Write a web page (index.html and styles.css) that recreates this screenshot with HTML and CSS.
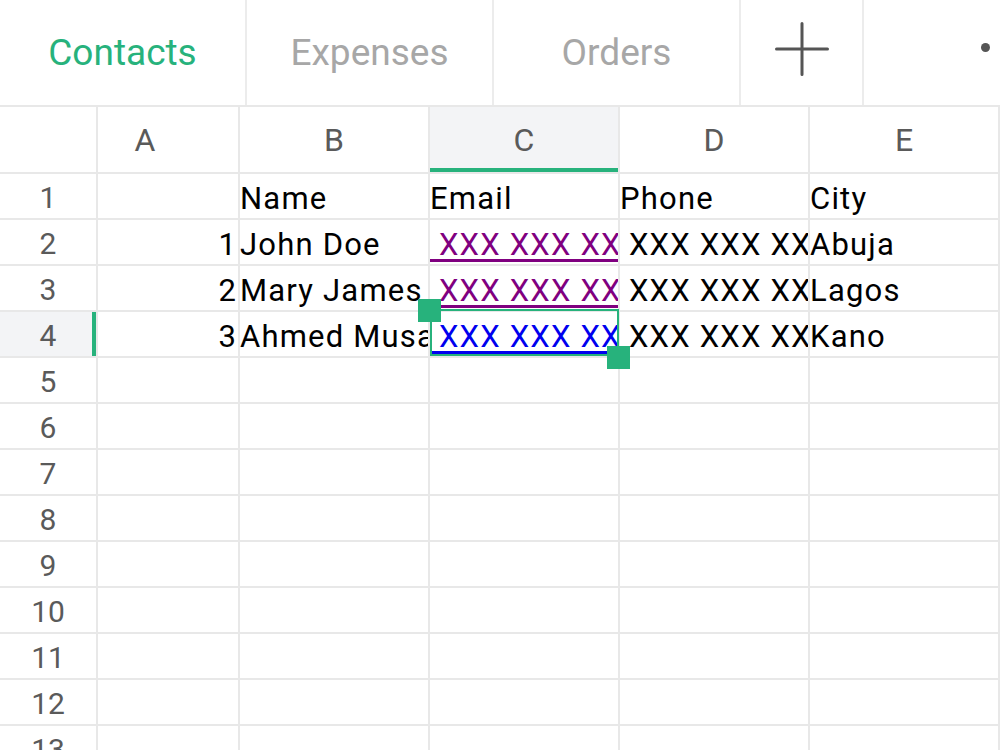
FILE: index.html
```html
<!DOCTYPE html>
<html>

<head>
    <title>Contacts</title>
    <link rel="stylesheet" href="styles.css">
</head>

<body>
    <div class="tabs">
        <div class="tab active">Contacts</div>
        <div class="tab">Expenses</div>
        <div class="tab">Orders</div>
        <div class="tab add">
            <svg width="54" height="54" viewBox="0 0 54 54">
                <path d="M27 1.5V52.5M1.5 27H52.5" stroke="#555" stroke-width="3" stroke-linecap="round" fill="none" />
            </svg>
        </div>
        <div class="tab more"><span class="dot"></span></div>
    </div>

    <div class="sheet">
        <!-- column headers -->
        <div class="cell corner"></div>
        <div class="cell ch first">A</div>
        <div class="cell ch">B</div>
        <div class="cell ch sel">C</div>
        <div class="cell ch">D</div>
        <div class="cell ch">E</div>

        <div class="cell rh">1</div>
        <div class="cell"></div>
        <div class="cell">Name</div>
        <div class="cell">Email</div>
        <div class="cell">Phone</div>
        <div class="cell">City</div>

        <div class="cell rh">2</div>
        <div class="cell num">1</div>
        <div class="cell">John Doe</div>
        <div class="cell"><a href="#" class="link visited"> XXX XXX XX</a></div>
        <div class="cell"> XXX XXX XX</div>
        <div class="cell">Abuja</div>

        <div class="cell rh">3</div>
        <div class="cell num">2</div>
        <div class="cell">Mary James</div>
        <div class="cell"><a href="#" class="link visited"> XXX XXX XX</a></div>
        <div class="cell"> XXX XXX XX</div>
        <div class="cell">Lagos</div>

        <div class="cell rh sel">4</div>
        <div class="cell num">3</div>
        <div class="cell">Ahmed Musa</div>
        <div class="cell current">
            <span class="clip"><a href="#" class="link"> XXX XXX XX</a></span>
            <div class="selection"></div>
            <div class="handle tl"></div>
            <div class="handle br"></div>
        </div>
        <div class="cell"> XXX XXX XX</div>
        <div class="cell">Kano</div>

        <div class="cell rh">5</div><div class="cell"></div><div class="cell"></div><div class="cell"></div><div class="cell"></div><div class="cell"></div>
        <div class="cell rh">6</div><div class="cell"></div><div class="cell"></div><div class="cell"></div><div class="cell"></div><div class="cell"></div>
        <div class="cell rh">7</div><div class="cell"></div><div class="cell"></div><div class="cell"></div><div class="cell"></div><div class="cell"></div>
        <div class="cell rh">8</div><div class="cell"></div><div class="cell"></div><div class="cell"></div><div class="cell"></div><div class="cell"></div>
        <div class="cell rh">9</div><div class="cell"></div><div class="cell"></div><div class="cell"></div><div class="cell"></div><div class="cell"></div>
        <div class="cell rh">10</div><div class="cell"></div><div class="cell"></div><div class="cell"></div><div class="cell"></div><div class="cell"></div>
        <div class="cell rh">11</div><div class="cell"></div><div class="cell"></div><div class="cell"></div><div class="cell"></div><div class="cell"></div>
        <div class="cell rh">12</div><div class="cell"></div><div class="cell"></div><div class="cell"></div><div class="cell"></div><div class="cell"></div>
        <div class="cell rh">13</div><div class="cell"></div><div class="cell"></div><div class="cell"></div><div class="cell"></div><div class="cell"></div>
    </div>
</body>

</html>
```

FILE: styles.css
```css
html, body {
    margin: 0;
    height: 100%;
    overflow: hidden;
}

body {
    font-family: "Roboto", "Liberation Sans", sans-serif;
    background-color: #fff;
    color: #000;
}

/* sheet tabs */

.tabs {
    display: flex;
    height: 107px;
    border-bottom: 2px solid #e8e8e8;
    box-sizing: border-box;
}

.tab {
    width: 247px;
    flex-shrink: 0;
    border-right: 2px solid #ececec;
    box-sizing: border-box;
    display: flex;
    align-items: center;
    justify-content: center;
    font-size: 37px;
    color: #a7a7a7;
}

.tab.active {
    color: #27b27c;
}

.tab.add {
    width: 123px;
    padding-bottom: 7px;
}

.tab.more {
    flex: 1;
    border-right: none;
    justify-content: flex-end;
    padding-right: 10px;
    padding-bottom: 11px;
}

.dot {
    width: 9px;
    height: 9px;
    border-radius: 50%;
    background-color: #555;
}

/* grid */

.sheet {
    display: grid;
    grid-template-columns: 98px 142px 190px 190px 190px 190px;
    grid-template-rows: 67px;
    grid-auto-rows: 46px;
}

.cell {
    border-right: 2px solid #e8e8e8;
    border-bottom: 2px solid #e8e8e8;
    box-sizing: border-box;
    overflow: hidden;
    white-space: pre;
    font-size: 31px;
    letter-spacing: 1.2px;
    line-height: 38px;
    padding-top: 6px;
}

.ch {
    text-align: center;
    color: #5a5a5a;
    font-size: 32px;
    letter-spacing: 0;
    line-height: 63px;
    padding-top: 2px;
}

.ch.first {
    padding-right: 46px;
}

.ch.sel {
    background-color: #f3f4f6;
    box-shadow: inset 0 -4px 0 #27b27c;
}

.rh {
    text-align: center;
    color: #5a5a5a;
    font-size: 30px;
    letter-spacing: 0;
    line-height: 41px;
    padding-top: 3px;
}

.rh.sel {
    background-color: #f3f4f6;
    box-shadow: inset -4px 0 0 #27b27c;
}

.num {
    text-align: right;
    padding-right: 1px;
}

.link {
    color: #0000ee;
    text-decoration: underline;
    text-underline-offset: 4px;
}

.link.visited {
    color: #800080;
}

/* selected cell */

.cell.current {
    position: relative;
    overflow: visible;
    white-space: normal;
    z-index: 2;
}

.clip {
    display: block;
    overflow: hidden;
    white-space: pre;
}

.selection {
    position: absolute;
    left: 0;
    top: -3px;
    width: 189px;
    height: 47px;
    border: 2px solid #27b27c;
    box-sizing: border-box;
}

.handle {
    position: absolute;
    width: 23px;
    height: 23px;
    background-color: #27b27c;
}

.handle.tl {
    left: -12px;
    top: -13px;
}

.handle.br {
    left: 177px;
    top: 34px;
}
```
